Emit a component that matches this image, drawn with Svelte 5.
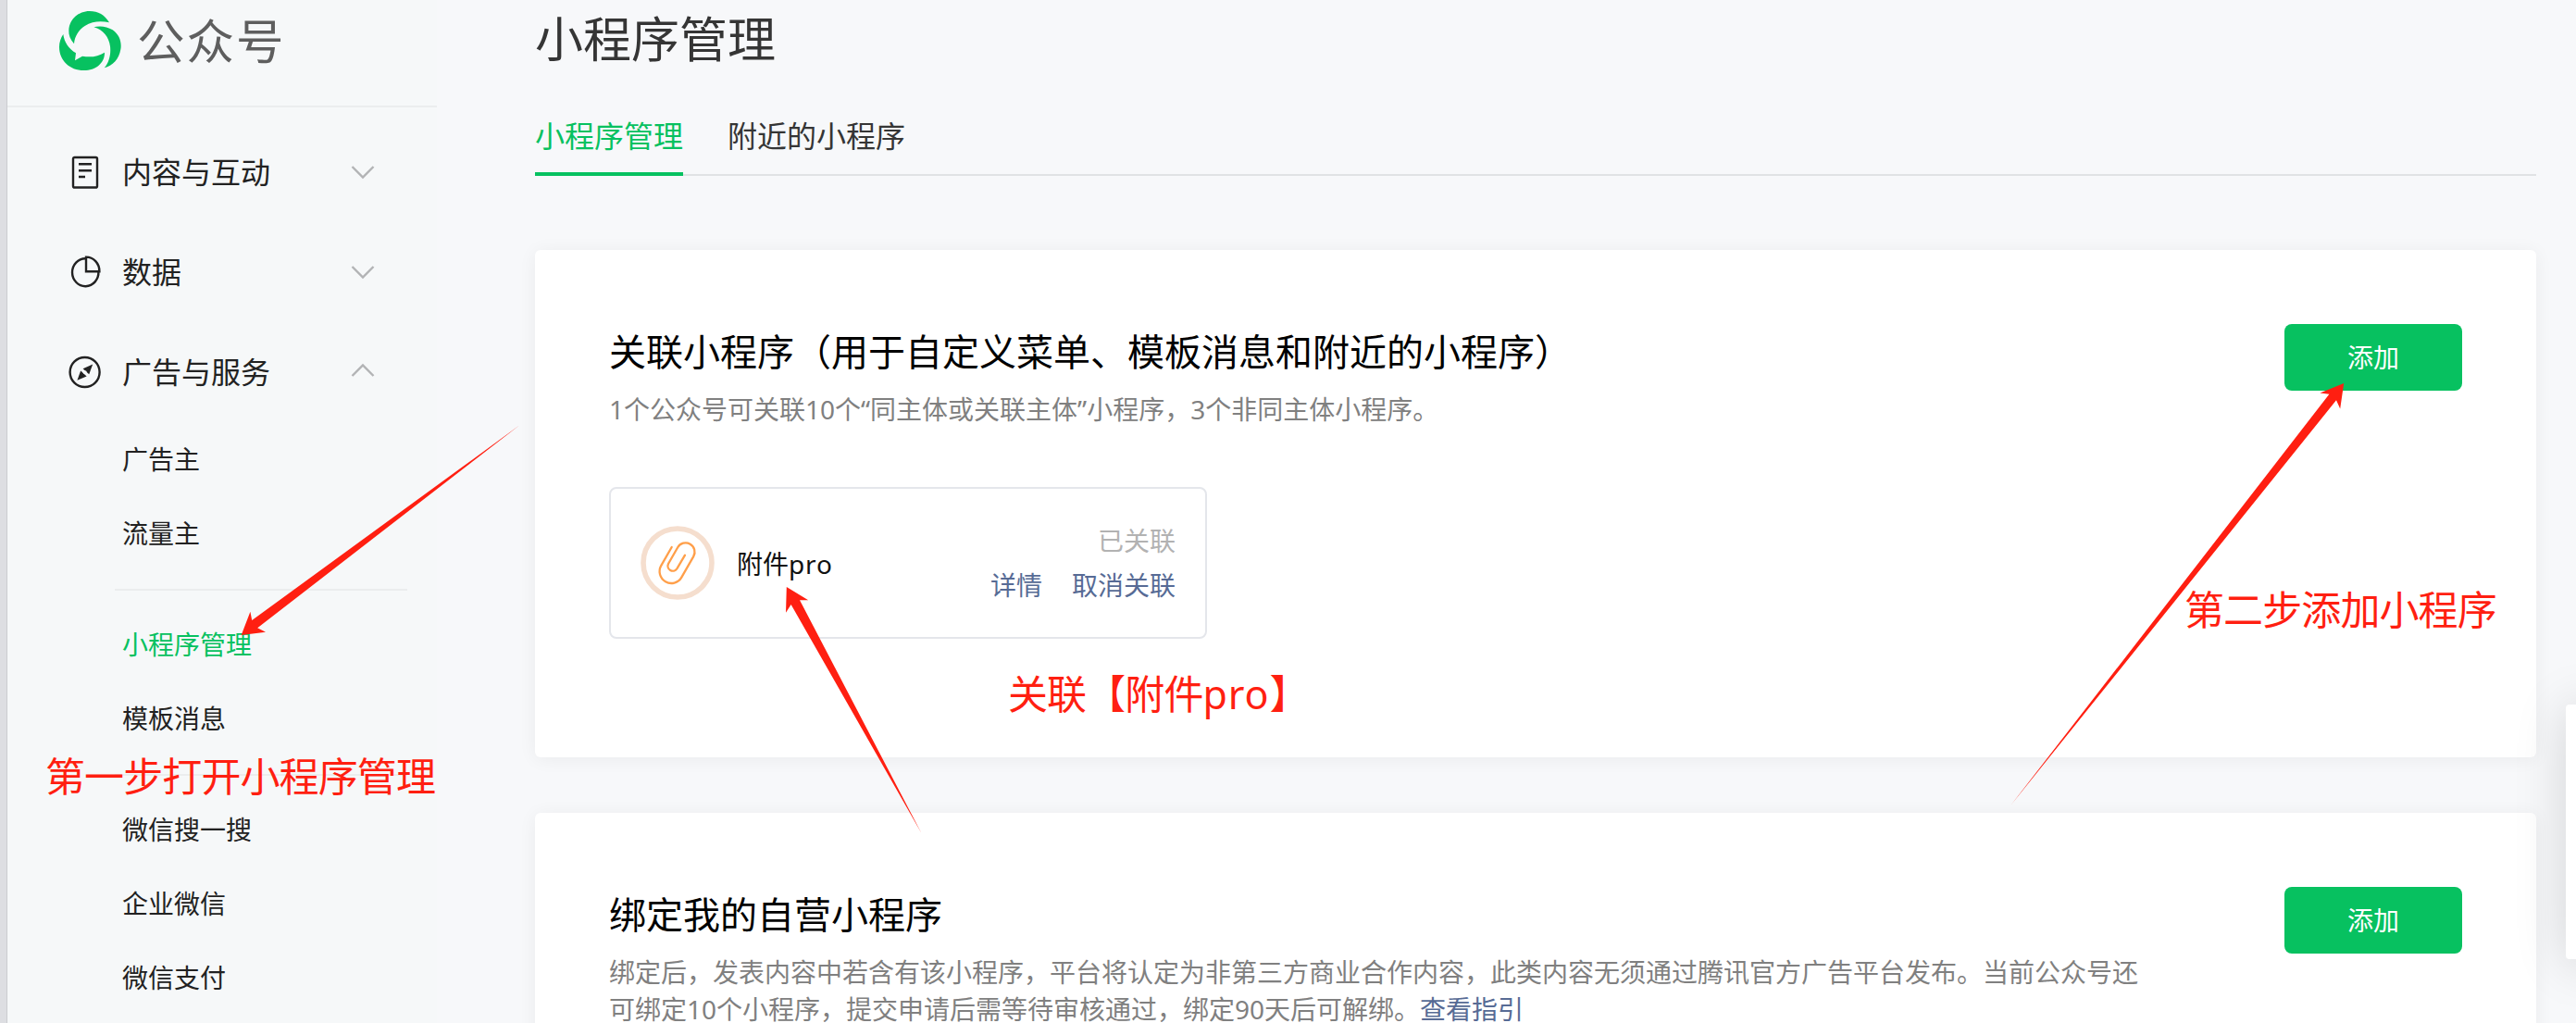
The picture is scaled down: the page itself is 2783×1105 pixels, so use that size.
<script>
  const groups = [
    { icon: 'doc', label: '内容与互动', open: false },
    { icon: 'pie', label: '数据', open: false },
    { icon: 'compass', label: '广告与服务', open: true },
  ];
  const sections = [
    ['广告主', '流量主'],
    ['小程序管理', '模板消息'],
    ['微信搜一搜', '企业微信', '微信支付'],
  ];
  const active = '小程序管理';
</script>

<div class="page">
  <div class="edge"></div>
  <aside class="sidebar">
    <div class="brand">
      <svg class="logo" viewBox="42 36 201 192" preserveAspectRatio="none">
        <path d="M90 142C78 127 72 114 73 98C75 62 105 36 140 36C168 36 190 48 204 73C178 67 150 68 125 84C104 98 92 118 90 142Z" />
        <path d="M154 88C170 83 196 84 215 97C238 113 245 138 241 160C236 192 215 214 188 220C204 202 210 175 207 150C203 120 185 97 154 88Z" />
        <path d="M55 111C58 136 72 158 96 172L93 196L117 182C145 187 168 183 189 170C190 204 160 228 122 228C75 228 42 195 42 152C42 138 47 122 55 111Z" />
      </svg>
      <span class="brand-name">公众号</span>
    </div>

    <nav class="menu">
      {#each groups as g}
        <div class="group">
          <svg class="icon" viewBox="0 0 36 36">
            {#if g.icon === 'doc'}
              <rect x="6" y="2" width="26" height="32.5" rx="1.6" />
              <path d="M12 9.3h14M12 16.3h14M12 23h7" />
            {:else if g.icon === 'pie'}
              <path d="M19.4 3.2A14.2 15 0 1 0 33.4 17.4" />
              <path d="M20 1.6V17.2H34.4A14.4 15.4 0 0 0 20 1.6Z" />
            {:else}
              <circle cx="18.6" cy="18" r="16" />
              <path class="solid" d="M27.2 9.6L23.2 20.2L16.6 14.2Z" />
              <path class="solid" d="M10.4 26.8L14.2 16.6L20.6 22.4Z" />
              <circle class="dot" cx="18.8" cy="18.2" r="2" />
            {/if}
          </svg>
          <span class="group-label">{g.label}</span>
          <svg class="chevron" class:up={g.open} viewBox="0 0 26 16">
            <path d="M1.5 2L13 13.6L24.5 2" />
          </svg>
        </div>
      {/each}

      {#each sections as items, i}
        {#if i > 0}<div class="rule"></div>{/if}
        {#each items as item}
          <div class="item" class:active={item === active}>{item}</div>
        {/each}
      {/each}
    </nav>
  </aside>

  <main class="main">
    <h1>小程序管理</h1>
    <div class="tabs">
      <div class="tab current">小程序管理</div>
      <div class="tab">附近的小程序</div>
    </div>

    <section class="card first">
      <div class="card-head">
        <div class="intro">
          <h2>关联小程序（用于自定义菜单、模板消息和附近的小程序）</h2>
          <p>1个公众号可关联10个“同主体或关联主体”小程序，3个非同主体小程序。</p>
        </div>
        <button>添加</button>
      </div>
      <div class="app">
        <svg class="avatar" viewBox="0 0 80 80">
          <circle cx="40" cy="40" r="37" />
          <path d="M33.7 23L22.3 42.9A12.7 12.7 0 0 0 44.3 55.6L57.2 33.1A9.8 9.8 0 0 0 40.2 23.3L30 41A5.4 5.4 0 0 0 39.3 46.4L48 31.7" />
        </svg>
        <span class="app-name">附件<span class="latin">pro</span></span>
        <div class="app-side">
          <span class="state">已关联</span>
          <span class="links"><a>详情</a><a>取消关联</a></span>
        </div>
      </div>
    </section>

    <section class="card">
      <div class="card-head">
        <div class="intro">
          <h2>绑定我的自营小程序</h2>
          <p>绑定后，发表内容中若含有该小程序，平台将认定为非第三方商业合作内容，此类内容无须通过腾讯官方广告平台发布。当前公众号还<br />可绑定10个小程序，提交申请后需等待审核通过，绑定90天后可解绑。<a>查看指引</a></p>
        </div>
        <button>添加</button>
      </div>
    </section>
  </main>

  <div class="floating-panel"></div>

  <svg class="arrows" viewBox="0 0 2783 1105">
    <polygon points="260.7,686 270.4,660.7 272.2,670 561,459.5 278.2,678.3 287,682.7" />
    <polygon points="849.8,634 873.2,648.3 864,648.3 995.5,900 854.6,653 849,661.7" />
    <polygon points="2532.2,414 2506.4,424.4 2516.4,425.8 2173,869 2524,432.3 2528.2,441.5" />
  </svg>
  <div class="note step-one">第一步打开小程序管理</div>
  <div class="note link-app">关联【附件<span class="latin">pro</span>】</div>
  <div class="note step-two">第二步添加小程序</div>
</div>

<style>
  :global(body) {
    margin: 0;
    overflow: hidden;
  }
  .page {
    position: relative;
    display: flex;
    width: 2783px;
    height: 1105px;
    overflow: hidden;
    background: #f7f8fa;
    font-family: 'Noto Sans', 'Noto Sans CJK SC', sans-serif;
    font-size: 28px;
    color: #222;
    white-space: nowrap;
  }
  .edge {
    flex: none;
    box-sizing: border-box;
    width: 8px;
    background: #dddee2;
    border-right: 1px solid #cbccd0;
  }
  .sidebar {
    flex: none;
    width: 464px;
    background: #f6f8f9;
  }
  .brand {
    box-sizing: border-box;
    display: flex;
    align-items: center;
    height: 116px;
    padding: 0 0 26px 56px;
    border-bottom: 2px solid #ebedee;
  }
  .logo {
    width: 67px;
    height: 64px;
    fill: #07c160;
  }
  .brand-name {
    margin-left: 17px;
    font-size: 51.5px;
    line-height: 60px;
    letter-spacing: 2px;
    color: #5e5e5e;
  }
  .menu {
    padding-top: 16px;
  }
  .group {
    display: flex;
    align-items: center;
    height: 108px;
    padding: 0 67px 0 65px;
  }
  .icon {
    width: 36px;
    height: 36px;
    fill: none;
    stroke: #222;
    stroke-width: 2.4;
  }
  .icon .solid {
    fill: #222;
    stroke: none;
  }
  .icon .dot {
    fill: #f6f8f9;
    stroke: none;
  }
  .group-label {
    flex: 1;
    margin-left: 23px;
    font-size: 32px;
    line-height: 48px;
  }
  .chevron {
    width: 26px;
    height: 16px;
    fill: none;
    stroke: #b2b3b5;
    stroke-width: 2.4;
  }
  .up {
    transform: rotate(180deg);
    margin-bottom: 4px;
  }
  .item {
    height: 80px;
    padding-left: 124px;
    line-height: 80px;
  }
  .active {
    color: #07c160;
  }
  .rule {
    width: 316px;
    height: 2px;
    margin: 20px 0 18px 116px;
    background: #ebedee;
  }
  .main {
    width: 2162px;
    padding-left: 106px;
  }
  h1 {
    margin: 0 0 24px;
    font-size: 52px;
    font-weight: 400;
    line-height: 84px;
    color: #353535;
  }
  .tabs {
    display: flex;
    gap: 48px;
    height: 80px;
    border-bottom: 2px solid #e0e2e4;
    font-size: 32px;
    line-height: 78px;
    color: #353535;
    box-sizing: border-box;
    height: 82px;
  }
  .tab {
    height: 78px;
  }
  .current {
    color: #07c160;
    border-bottom: 4px solid #07c160;
  }
  .card {
    box-sizing: border-box;
    height: 548px;
    margin-top: 60px;
    padding: 80px;
    background: #fff;
    border-radius: 6px;
    box-shadow: 0 2px 20px rgba(0, 0, 0, 0.055);
  }
  .first {
    margin-top: 80px;
  }
  .card-head {
    display: flex;
    justify-content: space-between;
    align-items: flex-start;
  }
  h2 {
    margin: 0 0 12px;
    font-size: 40px;
    font-weight: 400;
    line-height: 60px;
    color: #000;
  }
  p {
    margin: 0;
    line-height: 40px;
    color: #808080;
  }
  .latin {
    letter-spacing: 0.03em;
  }
  a {
    color: #576b95;
  }
  button {
    width: 192px;
    height: 72px;
    padding: 0;
    border: 0;
    border-radius: 8px;
    background: #07c160;
    color: #fff;
    font: inherit;
    line-height: 72px;
  }
  .app {
    box-sizing: border-box;
    display: flex;
    align-items: center;
    width: 646px;
    height: 164px;
    margin-top: 64px;
    padding: 0 32px;
    border: 2px solid #e4e6eb;
    border-radius: 8px;
  }
  .avatar {
    width: 80px;
    height: 80px;
    fill: none;
  }
  .avatar circle {
    stroke: #f5dece;
    stroke-width: 5.6;
  }
  .avatar path {
    stroke: #ff9f4a;
    stroke-width: 2.3;
    stroke-linecap: round;
  }
  .app-name {
    flex: 1;
    margin-left: 24px;
    color: #111;
  }
  .app-side {
    display: flex;
    flex-direction: column;
    align-items: flex-end;
    line-height: 48px;
  }
  .state {
    color: #b2b2b2;
  }
  .links {
    display: flex;
    gap: 32px;
  }
  .floating-panel {
    position: absolute;
    left: 2772px;
    top: 761px;
    width: 60px;
    height: 275px;
    background: #fff;
    border-radius: 4px;
    box-shadow: 0 4px 56px rgba(0, 0, 0, 0.15);
  }
  .arrows {
    position: absolute;
    inset: 0;
    width: 2783px;
    height: 1105px;
    fill: #ff1f11;
  }
  .note {
    position: absolute;
    font-size: 43px;
    line-height: 60px;
    letter-spacing: -0.9px;
    color: #ff1f11;
  }
  .note .latin {
    letter-spacing: 0.02em;
  }
  .step-one {
    left: 49px;
    top: 809px;
  }
  .link-app {
    left: 1089px;
    top: 720px;
  }
  .step-two {
    left: 2360px;
    top: 629px;
  }
</style>
